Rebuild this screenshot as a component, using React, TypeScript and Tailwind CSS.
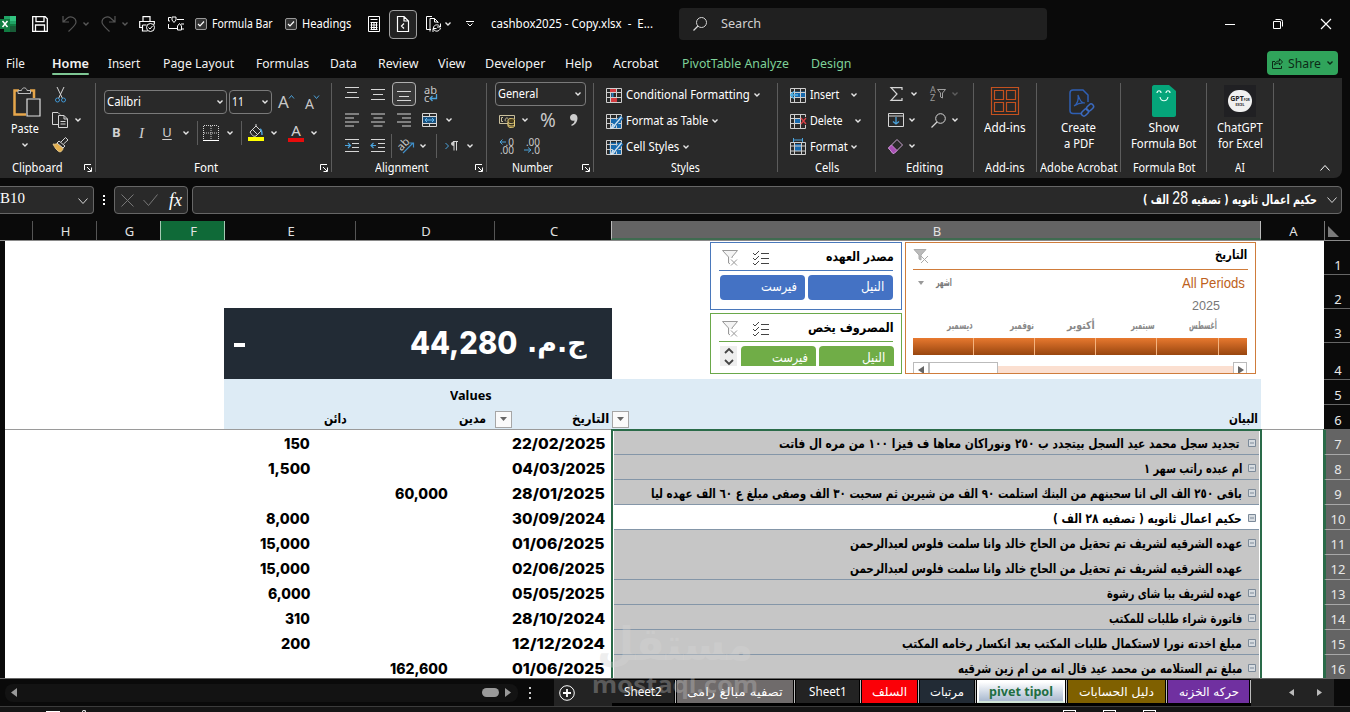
import { useLayoutEffect, useRef, useState } from "react";
import type { ReactNode } from "react";

type FitProps = { w: number; className?: string; rtl?: boolean; children: ReactNode };

function Fit({ w, className = "", rtl = false, children }: FitProps) {
  const ref = useRef<HTMLSpanElement>(null);
  const [scale, setScale] = useState(1);
  useLayoutEffect(() => {
    if (ref.current) setScale(w / ref.current.offsetWidth);
  }, [w]);
  return (
    <span dir="ltr" className={`block shrink-0 whitespace-nowrap ${className}`} style={{ width: w }}>
      <span
        ref={ref}
        dir={rtl ? "rtl" : "ltr"}
        className="inline-block origin-left"
        style={{ transform: `scaleX(${scale})` }}
      >
        {children}
      </span>
    </span>
  );
}

function Ico({ w = 16, h = 16, className = "", children }: { w?: number; h?: number; className?: string; children: ReactNode }) {
  return (
    <svg
      width={w}
      height={h}
      viewBox={`0 0 ${w} ${h}`}
      fill="none"
      stroke="#d6d6d6"
      className={`block shrink-0 overflow-visible ${className}`}
    >
      {children}
    </svg>
  );
}

function Chev({ className = "", color = "#e6e6e6" }: { className?: string; color?: string }) {
  return (
    <Ico w={6} h={4} className={className}>
      <path d="M.5 .5 3 3 5.5 .5" stroke={color} strokeWidth="1.4" />
    </Ico>
  );
}

function Launcher({ className = "" }: { className?: string }) {
  return (
    <Ico w={8} h={8} className={className}>
      <path d="M.5 6V.5H7M3 3l4 4M7.5 3.5v4h-4" stroke="#fff" />
    </Ico>
  );
}

function Sep() {
  return <div className="mt-[5px] h-[89px] w-px shrink-0 bg-[#5c5c5c]" />;
}

function Lines({ d, className = "" }: { d: string; className?: string }) {
  return (
    <Ico w={14} h={14} className={className}>
      <path d={d} strokeWidth="1.1" />
    </Ico>
  );
}

function TitleBar() {
  return (
    <div className="flex h-[48px] items-center">
      <Ico w={16} h={16}>
        <path d="M4 0h12v16H4z" fill="#21a366" stroke="none" />
        <path d="M10 0h6v5h-6z" fill="#33c481" stroke="none" />
        <path d="M4 8h12v8H4z" fill="#107c41" stroke="none" />
        <path d="M10 10h6v6h-6z" fill="#185c37" stroke="none" />
        <path d="M-2 3h12v10H-2z" fill="#107c41" stroke="none" />
        <path d="m2.5 5 5 6M7.500 5l-5 6" stroke="#fff" strokeWidth="1.5" />
      </Ico>
      <Ico className="ml-4">
        <path d="M.7.7h12.500l2.100 2.100v12.500H.7zM4 .7v5h8v-5M3.500 15V9h9v6" stroke="#fff" strokeWidth="1.300" />
      </Ico>
      <Ico w={15} className="ml-[14px]">
        <path d="M1 0v6h6M1 6l4.500-4C9-.5 14 2 14 6c0 3-3 5-7.500 9.500" stroke="#555" strokeWidth="1.200" />
      </Ico>
      <Chev className="ml-[6px]" color="#5a5a5a" />
      <Ico w={15} className="ml-3">
        <path d="M14 0v6H8M14 6 9.500 2C6-.5 1 2 1 6c0 3 3 5 7.500 9.500" stroke="#555" strokeWidth="1.200" />
      </Ico>
      <Chev className="ml-[6px]" color="#5a5a5a" />
      <Ico className="ml-[11px]">
        <path d="M4 5V.7h7V5M3 11.500H.7V5.500h14.600v3M3.500 9v6h5M3.500 9h4" stroke="#fff" strokeWidth="1.200" />
        <circle cx="11.500" cy="11.500" r="4" stroke="#fff" />
        <path d="m9.500 11.500 1.500 1.500 2.500-3" stroke="#fff" />
      </Ico>
      <Ico className="ml-[13px]">
        <path d="M3 1.500H.5V5H2M.5 8v4.500h6M9 3.500h7M6 12.500h3M13 8h3M13 13h3" stroke="#fff" />
        <path d="M4 1h4v3L6 6.500 4 4zM9.500 14v-4l2-2.500 2 2.500v4z" stroke="#fff" />
      </Ico>
      <Check className="ml-[11px]" />
      <Fit w={61} className="ml-[5px] text-xs text-white">Formula Bar</Fit>
      <Check className="ml-3" />
      <Fit w={49} className="ml-[5px] text-xs text-white">Headings</Fit>
      <Ico w={12} h={16} className="ml-[17px]">
        <path d="M.5.5h11v15H.5zM2.500 3.500h7M2.500 6.500h7M2.500 9h7M2.500 11.500h7M2.500 13.500h7M3.500 6v8M6 6v8M8.500 6v8" stroke="#fff" />
      </Ico>
      <div className="ml-[9px] flex h-[29px] w-7 items-center justify-center rounded border border-[#a0a0a0] bg-[#222]">
        <Ico w={12} h={16}>
          <path d="M.5.5H7l4.500 4.500v10.500H.5zM7 .5V5h4.500M7 7.500 4.500 10 7 12.500" stroke="#fff" strokeWidth="1.200" />
        </Ico>
      </div>
      <Ico w={15} className="ml-[9px]">
        <path d="M5 13.500H.5V.5H6M4 15.500V2.500h4.500L12 6v1M8.500 2.500V6H12" stroke="#fff" />
        <path d="M7.500 12c0-4 6-4 6.500-1M14.500 7.500V11H11M14.500 12c-1 4-6 4-7 1M7 16v-3.500h3.500" stroke="#fff" />
      </Ico>
      <Chev className="ml-1" />
      <Ico w={8} h={6} className="ml-[15px]">
        <path d="M0 .5h8M1.500 2.500 4 5l2.500-2.500" stroke="#fff" />
      </Ico>
      <Fit w={162} className="ml-[17px] text-xs text-white">cashbox2025 - Copy.xlsx&nbsp; -&nbsp; E...</Fit>
      <div className="ml-[26px] flex h-8 w-[368px] items-center rounded-sm bg-[#202020]">
        <Ico w={14} h={14} className="ml-[14px]">
          <circle cx="8.500" cy="5.500" r="5" />
          <path d="M5 9 .5 13.500" strokeWidth="1.300" />
        </Ico>
        <Fit w={40} className="ml-[14px] text-[13px] text-[#d0d0d0]">Search</Fit>
      </div>
      <div className="ml-[178px] h-px w-[10px] bg-white" />
      <Ico w={10} h={10} className="ml-[38px]">
        <path d="M.5 2.500h7v7h-7zM2.500.5h5a2 2 0 0 1 2 2v5" stroke="#fff" />
      </Ico>
      <Ico w={10} h={10} className="ml-[38px]">
        <path d="m0 0 10 10M10 0 0 10" stroke="#fff" strokeWidth="1.200" />
      </Ico>
    </div>
  );
}

function Check({ className = "" }: { className?: string }) {
  return (
    <Ico w={12} h={12} className={className}>
      <rect x=".5" y=".5" width="11" height="11" rx="1.500" fill="#333" stroke="#999" />
      <path d="m3 6 2 2 4-4.500" stroke="#fff" strokeWidth="1.200" />
    </Ico>
  );
}

function MenuTabs() {
  return (
    <div className="flex h-[30px] items-center text-[13px] leading-5 text-[#f2f2f2]">
      <Fit w={19} className="ml-[6px]">File</Fit>
      <div className="relative ml-[27px]">
        <Fit w={37} className="font-semibold">Home</Fit>
        <div className="absolute -bottom-[2px] h-[2px] w-[37px] rounded bg-[#7ec794]" />
      </div>
      <Fit w={32} className="ml-[19px]">Insert</Fit>
      <Fit w={71} className="ml-[23px]">Page Layout</Fit>
      <Fit w={53} className="ml-[22px]">Formulas</Fit>
      <Fit w={27} className="ml-[21px]">Data</Fit>
      <Fit w={40} className="ml-[21px]">Review</Fit>
      <Fit w={27} className="ml-5">View</Fit>
      <Fit w={60} className="ml-5">Developer</Fit>
      <Fit w={27} className="ml-5">Help</Fit>
      <Fit w={46} className="ml-[21px]">Acrobat</Fit>
      <Fit w={107} className="ml-[23px] text-[#7fd199]">PivotTable Analyze</Fit>
      <Fit w={40} className="ml-[22px] text-[#7fd199]">Design</Fit>
      <div className="ml-[416px] flex h-6 w-[71px] items-center rounded bg-[#30a45b]">
        <Ico w={11} h={11} className="ml-[5px]">
          <path d="M3 3.500H.5v7h9V8M2.500 7c.5-3 2.500-4 5-4V.8L10.500 4l-3 3V5C5.500 5 4 5.500 2.500 7z" stroke="#0c2b17" />
        </Ico>
        <Fit w={33} className="ml-[5px] text-[#0c2b17]">Share</Fit>
        <Chev className="ml-[6px]" color="#0c2b17" />
      </div>
    </div>
  );
}

function Group({ className, label, lw, lx, launch, children }: { className: string; label: string; lw: number; lx: string; launch?: string; children: ReactNode }) {
  return (
    <div className={`flex shrink-0 flex-col ${className}`}>
      <div className="h-[80px]">{children}</div>
      <div className="flex h-5 items-center text-xs text-white">
        <Fit w={lw} className={lx}>{label}</Fit>
        {launch && <Launcher className={launch} />}
      </div>
    </div>
  );
}

function GridIcon({ kind }: { kind: "cond" | "table" | "cell" | "insert" | "delete" | "format" }) {
  return (
    <Ico>
      {kind === "cond" && <path d="M4 1h6v4H4zM5 10.500h6V15H5z" fill="#d23a3f" stroke="none" />}
      {kind === "table" && <path d="M5 5h10v10H5z" fill="#1769ad" stroke="none" />}
      {kind === "cell" && <path d="M3.500 3.500H15V15H3.500z" fill="#1769ad" stroke="none" />}
      {kind === "insert" && <path d="M5 4.500h10.500v6H5z" fill="#1769ad" stroke="none" />}
      {kind === "delete" && <path d="M4 5h6v6H4z" fill="#1769ad" stroke="none" />}
      {kind === "format" && <path d="M4.500 5h7v7h-7z" fill="#1769ad" stroke="none" />}
      <path
        d={kind === "format" ? "M.5 3.500h15v12H.5zM.5 7h15M.5 12h15M4.500 3v13M11.500 3v13" : "M.5 1.500h15v14H.5zM.5 5.500h15M.5 10.500h15M4.500 1v14M10.500 1v14"}
        stroke="#cfcfcf"
      />
      {kind === "cond" && <path d="M4 2h6v3H4zM5 11h6v4H5z" fill="#d23a3f" stroke="none" />}
      {kind === "cond" && <path d="M5.500 6h2v4h-2z" fill="#2c7cc0" stroke="none" />}
      {(kind === "table" || kind === "cell") && (
        <>
          <path d="m16 4-8 8" stroke="#1769ad" strokeWidth="4" />
          <path d="m15.500 4-6 7c-1 3-2.500 4-5 4.500 2-1 1-2 2.500-4l2 1.500" stroke="#cfe3f3" strokeWidth="1.400" />
        </>
      )}
      {kind === "insert" && <path d="M8 8H1M4 4.500.8 8 4 11.500" stroke="#4db2ea" strokeWidth="1.500" />}
      {kind === "delete" && (
        <>
          <path d="M11 4h6v8h-6z" fill="#292929" stroke="none" />
          <path d="m11 5 5 6M16 5l-5 6" stroke="#dc4248" strokeWidth="1.300" />
        </>
      )}
      {kind === "format" && <path d="M3.500 1h9M3.500-1v4M12.500-1v4" stroke="#4ba3dc" />}
    </Ico>
  );
}

function MenuRow({ kind, label, w, chev }: { kind: "cond" | "table" | "cell" | "insert" | "delete" | "format"; label: string; w: number; chev: string }) {
  return (
    <div className="flex h-[26px] items-center text-xs text-white">
      <GridIcon kind={kind} />
      <Fit w={w} className="ml-1">{label}</Fit>
      <Chev className={chev} />
    </div>
  );
}

function BigButton({ icon, lines, widths }: { icon: ReactNode; lines: string[]; widths: number[] }) {
  return (
    <div className="flex flex-col items-center text-xs leading-4 text-white">
      <div className="mb-[2px] flex h-10 items-center pt-[5px]">{icon}</div>
      {lines.map((line, i) => (
        <Fit key={line} w={widths[i]}>{line}</Fit>
      ))}
    </div>
  );
}

function Ribbon() {
  return (
    <div className="flex h-[100px] w-[1342px] rounded-br-lg bg-[#292929]">
      <Group className="w-[95px]" label="Clipboard" lw={51} lx="ml-3" launch="ml-[21px]">
        <div className="flex">
          <div className="flex w-[50px] flex-col items-center pt-[9px]">
            <Ico w={28} h={30} className="ml-1">
              <path d="M6 3.500H1.500v24H13M17 3.500h4V11" stroke="#e6a64b" strokeWidth="2.500" />
              <path d="M5 6.500V3.500h3.500C9 0 13.500 0 14 3.500h3.500v3z" fill="#292929" stroke="#bdbdbd" />
              <path d="M14 12h13v17H14z" fill="#292929" stroke="#e0e0e0" strokeWidth="1.200" />
            </Ico>
            <Fit w={28} className="mt-1 text-xs text-white">Paste</Fit>
            <Chev className="mt-[6px]" />
          </div>
          <div className="flex w-11 flex-col pt-[9px]">
            <Ico w={11} h={16} className="ml-[5px]">
              <path d="m2 0 5.500 11.500M9 0 3.500 11.500" />
              <circle cx="2.500" cy="13" r="2" stroke="#3f97d4" />
              <circle cx="8.500" cy="13" r="2" stroke="#3f97d4" />
            </Ico>
            <div className="mt-[9px] flex items-center">
              <Ico className="ml-[2px]">
                <path d="M6 12.500H.5V.5H6l2 2M6.500 3.500H12l3.500 3.500v8.500h-9zM12 3.500V7h3.500M8.500 9.500h5M8.500 12h5" />
              </Ico>
              <Chev className="ml-[7px]" />
            </div>
            <Ico className="ml-[2px] mt-[9px]">
              <path d="M1 7c3 1 4-1 5-1l5 5c0 2-1 3-3 4-3-1-5-4-7-8z" fill="#e4b04f" stroke="#e4c686" />
              <path d="m5 6 2-2 6 5-2 2zM9 5l4.500-4.500L16 3l-4.500 4" fill="#292929" />
            </Ico>
          </div>
        </div>
      </Group>
      <Sep />

      <Group className="w-[235px]" label="Font" lw={24} lx="ml-[98px]" launch="ml-[102px]">
        <div className="flex pt-3">
          <div className="ml-2 flex h-6 w-[123px] items-center rounded border border-[#7a7a7a] text-xs text-white">
            <Fit w={34} className="ml-[2px]">Calibri</Fit>
            <Chev className="ml-[76px]" />
          </div>
          <div className="ml-[2px] flex h-6 w-[43px] items-center rounded border border-[#7a7a7a] text-xs text-white">
            <Fit w={12} className="ml-[2px]">11</Fit>
            <Chev className="ml-[18px]" />
          </div>
          <div className="ml-[6px] flex h-6 w-[12px] items-center text-[17px] text-[#c8c8c8]">A</div>
          <Ico w={5} h={4} className="-ml-px mt-[5px]">
            <path d="m0 3.500 2.500-3 2.500 3" stroke="#4c9fd6" />
          </Ico>
          <div className="ml-[11px] flex h-6 w-[10px] items-center pt-[2px] text-[14px] text-[#c8c8c8]">A</div>
          <Ico w={5} h={4} className="-ml-[1px] mt-[5px]">
            <path d="m0 .5 2.500 3 2.500-3" stroke="#4c9fd6" />
          </Ico>
        </div>
        <div className="mt-[7px] flex h-6 items-center text-[13px] text-[#d0d0d0]">
          <span className="ml-4 w-[10px] font-bold">B</span>
          <span className="ml-[17px] w-2 font-['Liberation_Serif'] text-[15px] italic">I</span>
          <span className="ml-[15px] w-[10px] text-center underline underline-offset-2">U</span>
          <Chev className="ml-[11px]" />
          <div className="ml-2 h-6 w-px bg-[#5c5c5c]" />
          <Ico className="ml-[5px]">
            <path d="M.5 1v13M15.500 1v13M8 1v13M1 .5h14M1 8h14" strokeDasharray="1 1" />
            <path d="M0 15.500h16" stroke="#fff" />
          </Ico>
          <Chev className="ml-2" />
          <div className="ml-[8px] h-6 w-px bg-[#5c5c5c]" />
          <Ico className="ml-[6px]">
            <path d="m2 7 6-6 5 5-5 5c-3 1-4-1-6-4zM5 5l5 5M8 1V-1" />
            <path d="M12 4c2 1 2 3 2 6" stroke="#4c9fd6" strokeWidth="1.500" />
            <path d="M0 12h16v4H0z" fill="#ff0" stroke="none" />
          </Ico>
          <Chev className="ml-[7px]" />
          <div className="ml-[11px] flex w-4 flex-col items-center">
            <span className="h-[14px] text-[15px] leading-[13px]">A</span>
            <div className="h-1 w-4 bg-[#e80c0c]" />
          </div>
          <Chev className="ml-[7px]" />
        </div>
      </Group>
      <Sep />

      <Group className="w-[154px]" label="Alignment" lw={53} lx="ml-[43px]" launch="ml-[47px]">
        <div className="flex h-[29px] items-center pt-[3px]">
          <Lines className="ml-[13px]" d="M0 .5h14M2 5.500h10M0 10.500h14" />
          <Lines className="ml-3" d="M0 2.500h14M2 7.500h10M0 12.500h14" />
          <div className="ml-[7px] flex h-6 w-6 items-center justify-center rounded border border-[#b0b0b0] bg-[#393939]">
            <Lines d="M0 4.500h14M2 9.500h10M0 13.500h14" />
          </div>
          <div className="ml-2 text-[11px] leading-[8px] text-[#c8c8c8]">
            <div>ab</div>
            <div className="flex">
              c
              <Ico w={8} h={8}>
                <path d="M7.500 0v4.500H1M3.500 2 1 4.500 3.500 7" stroke="#4ba3dc" strokeWidth="1.300" />
              </Ico>
            </div>
          </div>
        </div>
        <div className="flex h-[26px] items-center">
          <Lines className="ml-[13px]" d="M0 1h14M0 5h9M0 9h14M0 13h9" />
          <Lines className="ml-3" d="M0 1h14M2.500 5h9M0 9h14M2.500 13h9" />
          <Lines className="ml-3" d="M0 1h14M5 5h9M0 9h14M5 13h9" />
          <Ico w={15} h={14} className="ml-[11px]">
            <path d="M.5.5h14v13H.5zM.5 3.500h14M.5 10.500h14M7.500.5v3M7.500 10.500v3" />
            <path d="M1 4h13v6H1z" fill="#174f7c" stroke="none" />
            <path d="M3 7h9M5 5 3 7l2 2M10 5l2 2-2 2" stroke="#69bcf0" />
          </Ico>
          <Chev className="ml-[9px]" />
        </div>
        <div className="flex h-[25px] items-center">
          <Ico w={14} h={13} className="ml-[13px]">
            <path d="M0 .5h14M7 4.500h7M7 8.500h7M0 12.500h14" />
            <path d="M0 6.500h5M3 4l2.500 2.500L3 9" stroke="#4ba3dc" strokeWidth="1.200" />
          </Ico>
          <Ico w={14} h={13} className="ml-3">
            <path d="M0 .5h14M7 4.500h7M7 8.500h7M0 12.500h14" />
            <path d="M5 6.500H0M2.500 4 0 6.500 2.500 9" stroke="#4ba3dc" strokeWidth="1.200" />
          </Ico>
          <div className="ml-[6px] h-6 w-px bg-[#5c5c5c]" />
          <div className="relative ml-[6px] h-4 w-4 text-[11px] leading-3 text-[#c8c8c8]">
            <span className="-ml-[2px] -mt-px block w-4 -rotate-45">ab</span>
            <Ico className="absolute left-0 top-0">
              <path d="M5 15 15 5M11 5h4.500v4.500" stroke="#3f8fc9" strokeWidth="1.200" />
            </Ico>
          </div>
          <Chev className="ml-[6px]" />
          <div className="ml-[10px] h-6 w-px bg-[#5c5c5c]" />
          <Ico w={13} h={10} className="ml-[8px]">
            <path d="m.5 2 3 3-3 3" stroke="#4ba3dc" />
            <path d="M9 9.500V.5M11.500 9.500V.5M13 .5H8" />
            <path d="M9 .5c-4 0-4 4.500 0 4.500z" fill="#ccc" stroke="none" />
          </Ico>
          <Chev className="ml-[9px]" />
        </div>
      </Group>
      <Sep />

      <Group className="w-[106px]" label="Number" lw={41} lx="ml-[25px]" launch="ml-[29px]">
        <div className="flex pt-1">
          <div className="ml-2 flex h-6 w-[91px] items-center rounded border border-[#7a7a7a] text-xs text-white">
            <Fit w={40} className="ml-[2px]">General</Fit>
            <Chev className="ml-[37px]" />
          </div>
        </div>
        <div className="flex h-[28px] items-center text-[#c8c8c8]">
          <Ico w={16} h={13} className="ml-3">
            <path d="M9 9.500H.5V1.500h15V5M4 3.500H2.500v4H4M9 4.500c-2-2-4 2-2 3" stroke="#c9bf9c" />
            <path d="M9 6c0-2 6.500-2 6.500 0v6c0 2-6.500 2-6.500 0zM9 8c0 2 6.500 2 6.500 0M9 10.500c0 2 6.500 2 6.500 0" fill="#4a3c18" stroke="#e8cf7b" />
          </Ico>
          <Chev className="ml-[7px]" />
          <Fit w={16} className="ml-3 text-[19px] leading-5">%</Fit>
          <Ico w={8} h={12} className="ml-[14px]">
            <path d="M0 3.500C0-1 7.500-1.500 7.500 4c0 4-2.500 7-6 8v-1.500c2-1 3-2 3-4C2 7.500 0 6 0 3.500z" fill="#ccc" stroke="none" />
          </Ico>
        </div>
        <div className="flex h-6 items-center text-[10px] leading-[8px] text-[#c8c8c8]">
          <div className="ml-[11px] w-4 text-right">
            <div className="flex items-center justify-end">
              <Ico w={7} h={6}>
                <path d="M7 3H1M3.500.5 1 3l2.500 2.500" stroke="#4ba3dc" />
              </Ico>
              .0
            </div>
            .00
          </div>
          <div className="ml-[10px] w-4 text-right">
            .00
            <div className="flex items-center justify-end">
              <Ico w={8} h={6}>
                <path d="M0 3h7M4 .5 7 3 4 5.500" stroke="#4ba3dc" />
              </Ico>
              .0
            </div>
          </div>
        </div>
      </Group>
      <Sep />

      <Group className="w-[183px]" label="Styles" lw={29} lx="ml-[77px]">
        <div className="ml-3 pt-1">
          <MenuRow kind="cond" label="Conditional Formatting" w={124} chev="ml-1" />
          <MenuRow kind="table" label="Format as Table" w={82} chev="ml-1" />
          <MenuRow kind="cell" label="Cell Styles" w={53} chev="ml-1" />
        </div>
      </Group>
      <Sep />

      <Group className="w-[97px]" label="Cells" lw={24} lx="ml-[37px]">
        <div className="ml-3 pt-1">
          <MenuRow kind="insert" label="Insert" w={29} chev="ml-3" />
          <MenuRow kind="delete" label="Delete" w={33} chev="ml-3" />
          <MenuRow kind="format" label="Format" w={38} chev="ml-[3px]" />
        </div>
      </Group>
      <Sep />

      <Group className="w-[97px]" label="Editing" lw={37} lx="ml-[30px]">
        <div className="ml-3 pt-[3px]">
          <div className="flex h-[26px] items-center">
            <Ico w={13} h={14} className="ml-[2px]">
              <path d="M12 3V.7H1L7 7 1 13.300h11V11" strokeWidth="1.200" />
            </Ico>
            <Chev className="ml-2" />
            <div className="ml-[13px] text-[9px] leading-[8px] text-[#999]">
              <div>A</div>
              <div>Z</div>
            </div>
            <Ico w={9} h={10} className="ml-[1px]">
              <path d="M.5.5h8L5.500 4v5L3.500 8V4z" stroke="#a0a0a0" />
            </Ico>
            <Chev className="ml-[6px]" color="#5e5e5e" />
          </div>
          <div className="flex h-[26px] items-center">
            <Ico w={16} h={14}>
              <path d="M.5.5h15v13H.5zM.5 3h15" />
              <path d="M8 4v7M5 8.500 8 11l3-2.500" stroke="#4ba3dc" strokeWidth="1.300" />
            </Ico>
            <Chev className="ml-[5px]" />
            <Ico w={15} h={15} className="ml-4">
              <circle cx="9.500" cy="5.500" r="4.800" />
              <path d="M6 9 .5 14.500" strokeWidth="1.300" />
            </Ico>
            <Chev className="ml-[6px]" />
          </div>
          <div className="flex h-[26px] items-center">
            <Ico w={15} h={15}>
              <path d="m.5 9 8.500-8.500 5.500 5.500-8.500 8.500H5z" stroke="#c9a5d0" />
              <path d="m.5 9 3-3L9 11.500l-3 3H5z" fill="#a94fb5" stroke="#c98ad2" />
            </Ico>
            <Chev className="ml-[6px]" />
          </div>
        </div>
      </Group>
      <Sep />

      <Group className="w-[62px]" label="Add-ins" lw={40} lx="ml-[11px]">
        <BigButton
          lines={["Add-ins"]}
          widths={[42]}
          icon={
            <Ico w={28} h={28}>
              <path d="M.5.5h27v27H.5zM3.500 3.500h9v9h-9zM15.500 3.500h9v9h-9zM3.500 15.500h9v9h-9zM15.500 15.500h9v9h-9z" stroke="#c4511f" strokeWidth="1.200" />
            </Ico>
          }
        />
      </Group>
      <Sep />
      <Group className="w-[83px]" label="Adobe Acrobat" lw={77} lx="ml-[3px]">
        <BigButton
          lines={["Create", "a PDF"]}
          widths={[35, 30]}
          icon={
            <Ico w={26} h={28} className="ml-[6px] mt-1">
              <path d="M12 24.500H4c-2 0-3-1-3-3V4c0-2 1-3 3-3h10l5 5v7" stroke="#2f5fb3" strokeWidth="1.500" />
              <path d="M9 6c2 5 3 8 7 8-5-1-8 1-11 3 3-2 5-5 4-11z" stroke="#2f5fb3" strokeWidth="1.200" />
              <rect x="12" y="21" width="8" height="5" rx="2.500" transform="rotate(-45 16 23.500)" stroke="#3b6abf" strokeWidth="1.500" />
              <rect x="17" y="16" width="8" height="5" rx="2.500" transform="rotate(-45 21 18.500)" stroke="#3b6abf" strokeWidth="1.500" />
            </Ico>
          }
        />
      </Group>
      <Sep />
      <Group className="w-[85px]" label="Formula Bot" lw={62} lx="ml-3">
        <BigButton
          lines={["Show", "Formula Bot"]}
          widths={[30, 65]}
          icon={
            <Ico w={24} h={32}>
              <path d="M2 0h15l7 6v24c0 1-1 2-2 2H2c-1 0-2-1-2-2V2C0 1 1 0 2 0z" fill="#05a57a" stroke="none" />
              <path d="M5 8c0-3 4-3 4 0M14 8c0-3 4-3 4 0M8 12c1 5 7 5 8 0" stroke="#e5fff6" strokeWidth="1.200" />
            </Ico>
          }
        />
      </Group>
      <Sep />
      <Group className="w-[66px]" label="AI" lw={10} lx="ml-7">
        <BigButton
          lines={["ChatGPT", "for Excel"]}
          widths={[46, 45]}
          icon={
            <div className="flex h-8 w-8 items-center justify-center bg-[#202023]">
              <div className="flex h-[22px] w-6 flex-col items-center justify-center rounded-full bg-[#f0f0f0] text-[#222]">
                <div className="text-[7px] font-bold leading-[7px]">
                  GPT<span className="text-[3px]">FOR</span>
                </div>
                <div className="text-[3px] font-bold leading-[3px]">EXCEL</div>
              </div>
            </div>
          }
        />
      </Group>
      <Sep />
      <Ico w={10} h={6} className="ml-[46px] mt-[87px]">
        <path d="m.5 5.500 4.500-5 4.500 5" stroke="#fff" />
      </Ico>
    </div>
  );
}

function FormulaBar() {
  return (
    <div className="mt-2 flex h-7">
      <div className="flex w-[94px] items-center rounded-r border border-l-0 border-[#666] bg-[#292929] text-white">
        <Fit w={25} className="-mt-[3px] font-['Liberation_Serif'] text-[15px]">B10</Fit>
        <Ico w={10} h={6} className="ml-[53px] mt-[2px]">
          <path d="m.5.5 4.500 5 4.500-5" />
        </Ico>
      </div>
      <div className="ml-[9px] flex w-[2px] flex-col justify-center gap-[2px]">
        <div className="h-[2px] bg-white" />
        <div className="h-[2px] bg-white" />
        <div className="h-[2px] bg-white" />
      </div>
      <div className="ml-[9px] flex w-[74px] items-center rounded border border-[#666] bg-[#292929]">
        <Ico w={13} h={13} className="ml-[6px]">
          <path d="m.5.5 12 12M12.500.5l-12 12" stroke="#777" />
        </Ico>
        <Ico w={15} h={12} className="ml-[9px]">
          <path d="m.5 6 5 5.500 9-11" stroke="#777" />
        </Ico>
        <span className="ml-[11px] font-['Liberation_Serif'] text-lg italic leading-5 text-white">fx</span>
      </div>
      <div className="ml-1 flex w-[1150px] items-center justify-end rounded border border-[#666] bg-[#292929] text-white">
        <Fit w={174} rtl className="-mt-[2px] font-['DejaVu_Sans'] text-[13px] font-bold leading-5">
          حكيم اعمال ثانويه ( تصفيه <span className="font-['Liberation_Sans'] text-[19px] font-normal">28</span> الف )
        </Fit>
        <Ico w={10} h={6} className="ml-[10px] mr-1">
          <path d="m.5.5 4.500 5 4.500-5" />
        </Ico>
      </div>
    </div>
  );
}

function ColumnHeaders() {
  return (
    <div className="mt-[7px] flex h-5 border-b border-[#8a8a8a] pl-[5px] text-[13px] leading-5 text-[#e2e2e2] *:shrink-0 *:pl-[2px] *:text-center">
      <div className="w-7 border-r border-[#555]" />
      <div className="w-16 border-r border-[#555]">H</div>
      <div className="w-[63px]">G</div>
      <div className="w-[65px] border-x border-[#a5c9b3] bg-[#0f6a38]">F</div>
      <div className="w-[131px] border-r border-[#555]">E</div>
      <div className="w-[139px] border-r border-[#555]">D</div>
      <div className="w-[116px]">C</div>
      <div className="w-[650px] border-x border-b-2 border-x-[#bbb] border-b-[#3f6b50] bg-[#646464]">B</div>
      <div className="w-16 border-r border-[#777]">A</div>
      <div className="w-4 pt-[5px]">
        <Ico w={11} h={11} className="ml-px">
          <path d="M0 0v11h11z" fill="#7b7b7b" stroke="none" />
        </Ico>
      </div>
    </div>
  );
}

function SlicerHead({ title, w }: { title: string; w: number }) {
  return (
    <div className="flex h-[27px] items-center">
      <Ico w={16} h={16} className="ml-[11px] mt-[2px]">
        <path d="M.5.500h15L10 7v8l-3.500-2V7z" fill="#f4f4f4" stroke="#999" />
        <path d="M8 8h8v8H8z" fill="#fff" stroke="none" />
        <path d="m9 9.500 6 6M15 9.500l-6 6" stroke="#999" />
      </Ico>
      <Ico w={16} h={14} className="ml-[15px] mt-[2px]">
        <path d="m0 2 2 2 4-4M0 7l2 2 4-4M0 12l2 2 4-4M8 2.500h8M8 7.500h8M8 12.500h8" stroke="#444" />
      </Ico>
      <Fit w={w} rtl className="ml-auto mr-[7px] text-[13px] font-bold leading-5 text-black">{title}</Fit>
    </div>
  );
}

const months: [string, number, string][] = [
  ["ديسمبر", 26, "ml-[41px]"],
  ["نوفمبر", 24, "ml-[37px]"],
  ["أكتوبر", 28, "ml-[33px]"],
  ["سبتمبر", 24, "ml-[36px]"],
  ["أغسطس", 28, "ml-[34px]"],
];

function TopArea() {
  return (
    <div className="flex h-[138px] font-['DejaVu_Sans']">
      <div className="ml-[219px] mt-[67px] flex h-[71px] w-[388px] items-center bg-[#222b35] text-white">
        <div className="ml-[10px] mt-[2px] h-1 w-[11px] bg-white" />
        <Fit w={107} className="ml-[165px] font-[Inter] text-[31px] font-extrabold">44,280</Fit>
        <Fit w={60} rtl className="ml-[10px] text-[26px] font-bold">ج.م.</Fit>
      </div>
      <div className="ml-[98px] w-[192px] pt-[1px]">
        <div className="h-[68px] border border-[#4a78bb] bg-white">
          <SlicerHead title="مصدر العهده" w={68} />
          <div className="ml-2 h-px w-[174px] bg-[#4a78bb]" />
          <div className="ml-[9px] mt-1 flex gap-[3px] text-[13px] leading-[23px] text-white">
            <div className="flex h-[25px] w-[85px] justify-end rounded bg-[#4472c4] pr-2">
              <Fit w={36} rtl>فيرست</Fit>
            </div>
            <div className="flex h-[25px] w-[85px] justify-end rounded bg-[#4472c4] pr-[9px]">
              <Fit w={23} rtl>النيل</Fit>
            </div>
          </div>
        </div>
        <div className="mt-[3px] h-[61px] border border-[#6aa84a] bg-white">
          <SlicerHead title="المصروف يخص" w={86} />
          <div className="ml-2 h-px w-[174px] bg-[#6aa84a]" />
          <div className="ml-[9px] mt-1 flex h-[20px] overflow-hidden text-[13px] leading-[23px] text-white">
            <div className="flex w-[17px] flex-col items-center justify-center gap-[7px] bg-[#eee]">
              <Ico w={8} h={4}>
                <path d="m0 4 4-4 4 4" stroke="#444" strokeWidth="1.800" />
              </Ico>
              <Ico w={8} h={4}>
                <path d="m0 0 4 4 4-4" stroke="#444" strokeWidth="1.800" />
              </Ico>
            </div>
            <div className="ml-1 flex h-[25px] w-[75px] justify-end rounded-t bg-[#70ad47] pr-2">
              <Fit w={36} rtl>فيرست</Fit>
            </div>
            <div className="ml-[3px] flex h-[25px] w-[75px] justify-end rounded-t bg-[#70ad47] pr-[9px]">
              <Fit w={23} rtl>النيل</Fit>
            </div>
          </div>
        </div>
      </div>
      <div className="ml-[3px] mt-[1px] flex h-[132px] w-[351px] flex-col overflow-hidden border border-[#cf7c3b] bg-white">
        <div className="flex h-[26px] shrink-0 items-center">
          <Ico w={14} h={14} className="ml-[8px]">
            <path d="M0 .500h12L7 6v5L5 10V6z" fill="#bbb" stroke="#aaa" />
            <path d="m7 7 7 7M14 7l-7 7" stroke="#aaa" />
          </Ico>
          <Fit w={32} rtl className="ml-[287px] -mt-[2px] text-[13px] font-bold leading-5 text-black">التاريخ</Fit>
        </div>
        <div className="ml-[7px] h-px w-[335px] shrink-0 bg-[#cf7c3b]" />
        <div className="mt-[3px] flex h-5 shrink-0 items-center text-[#777]">
          <Ico w={6} h={4} className="ml-3">
            <path d="M0 0h6L3 4z" fill="#999" stroke="none" />
          </Ico>
          <Fit w={16} rtl className="ml-3 text-[11px] font-bold">اشهر</Fit>
          <Fit w={63} className="ml-[230px] font-['Liberation_Sans'] text-sm text-[#bd5f20]">All Periods</Fit>
        </div>
        <Fit w={28} className="ml-[286px] mt-[3px] font-['Liberation_Sans'] text-[13px] leading-5 text-[#777]">2025</Fit>
        <div className="flex h-5 shrink-0 items-center text-[11px] font-bold text-[#888]">
          {months.map(([name, w, gap]) => (
            <Fit key={name} w={w} rtl className={gap}>{name}</Fit>
          ))}
        </div>
        <div className="ml-[7px] mt-[2px] flex h-[17px] w-[334px] shrink-0 divide-x divide-[#f4b37f] bg-linear-to-b from-[#e8792f] to-[#98460f]">
          <div className="w-[61px]" />
          <div className="w-[61px]" />
          <div className="w-[61px]" />
          <div className="w-[61px]" />
          <div className="w-[62px]" />
          <div className="w-7" />
        </div>
        <div className="ml-[7px] mt-[7px] flex h-4 w-[334px] shrink-0 items-stretch bg-white">
          <div className="w-4 border border-[#bbb] pl-[4px] pt-[3px]">
            <Ico w={6} h={8}>
              <path d="M6 0v8L0 4z" fill="#666" stroke="none" />
            </Ico>
          </div>
          <div className="w-[69px] border border-[#bbb]" />
          <div className="mt-1 flex-1 bg-[#fbdfd0]" />
          <div className="w-[14px] border border-[#bbb] pl-[4px] pt-[3px]">
            <Ico w={6} h={8}>
              <path d="M0 0v8l6-4z" fill="#666" stroke="none" />
            </Ico>
          </div>
        </div>
      </div>
    </div>
  );
}

function FilterButton({ className = "" }: { className?: string }) {
  return (
    <div className={`flex h-[17px] w-[17px] items-center justify-center border border-[#a6a6a6] bg-[#fafafa] ${className}`}>
      <Ico w={7} h={4}>
        <path d="M0 0h7L3.500 4z" fill="#666" stroke="none" />
      </Ico>
    </div>
  );
}

type Row = {
  e?: [string, number];
  d?: [string, number];
  date: string;
  text: string;
  w: number;
  bg?: string;
  noToggle?: boolean;
  noLine?: boolean;
};

const rows: Row[] = [
  { e: ["150", 26], date: "22/02/2025", text: "تجديد سجل محمد عيد السجل بيتجدد ب ٢٥٠ ونوراكان معاها ف فيزا ١٠٠ من مره ال فاتت", w: 461 },
  { e: ["1,500", 42], date: "04/03/2025", text: "ام عبده راتب سهر ١", w: 98 },
  { d: ["60,000", 53], date: "28/01/2025", text: "باقى ٢٥٠ الف الى انا سحبنهم من البنك استلمت ٩٠ الف من شيرين ثم سحبت ٣٠ الف وصفى مبلغ ع ٦٠ الف عهده ليا", w: 591 },
  { e: ["8,000", 44], date: "30/09/2024", text: "حكيم اعمال ثانويه ( تصفيه ٢٨ الف )", w: 189, bg: "bg-white" },
  { e: ["15,000", 50], date: "01/06/2025", text: "عهده الشرقيه لشريف تم تحةيل من الحاج خالد وانا سلمت فلوس لعبدالرحمن", w: 392, noLine: true },
  { e: ["15,000", 50], date: "02/06/2025", text: "عهده الشرقيه لشريف تم تحةيل من الحاج خالد وانا سلمت فلوس لعبدالرحمن", w: 392, noToggle: true },
  { e: ["6,000", 42], date: "05/05/2025", text: "عهده لشريف ببا شاى رشوة", w: 135 },
  { e: ["310", 25], date: "28/10/2024", text: "فاتورة شراء طلبات للمكتب", w: 133 },
  { e: ["200", 29], date: "12/12/2024", text: "مبلغ اخدته نورا لاستكمال طلبات المكتب بعد انكسار رخامه المكتب", w: 340 },
  { d: ["162,600", 58], date: "01/06/2025", text: "مبلغ تم الستلامه من محمد عيد قال انه من ام زين شرقيه", w: 284 },
];

function PivotTable() {
  return (
    <>
      <div className="ml-[219px] h-[50px] w-[1037px] bg-[#ddebf5] font-['DejaVu_Sans'] text-[13px] font-bold text-black">
        <div className="flex h-[30px] items-center pt-[3px]">
          <Fit w={42} className="ml-[226px] font-['Noto_Sans']">Values</Fit>
        </div>
        <div className="flex h-5 items-center">
          <Fit w={23} rtl className="ml-[100px]">دائن</Fit>
          <Fit w={27} rtl className="ml-[112px]">مدين</Fit>
          <FilterButton className="ml-[9px]" />
          <Fit w={37} rtl className="ml-[60px]">التاريخ</Fit>
          <FilterButton className="ml-[3px]" />
          <Fit w={29} rtl className="ml-auto mr-[3px]">البيان</Fit>
        </div>
      </div>
      <div className="relative h-[249px] overflow-hidden pt-px">
        {rows.map((row, i) => (
          <div key={i} className="flex h-[25px] font-[Inter] text-[15px] font-extrabold leading-[27px] text-black">
            <div className="flex w-[305px] justify-end">{row.e && <Fit w={row.e[1]}>{row.e[0]}</Fit>}</div>
            <div className="flex w-[138px] justify-end">{row.d && <Fit w={row.d[1]}>{row.d[0]}</Fit>}</div>
            <div className="flex w-[157px] justify-end">
              <Fit w={93}>{row.date}</Fit>
            </div>
            <div
              className={`ml-[9px] flex w-[645px] items-center justify-end border-b pt-[2px] font-['DejaVu_Sans'] text-[13px] font-bold leading-[23px] ${row.bg ?? "bg-[#c6c6c6]"} ${row.noLine ? "border-[#c6c6c6]" : "border-[#8496a8]"}`}
            >
              <Fit w={row.w} rtl className={row.date === "22/02/2025" ? "mr-[2px]" : ""}>{row.text}</Fit>
              <div className="ml-[6px] mr-[3px] w-2">
                {!row.noToggle && (
                  <Ico w={8} h={8}>
                    <path d="M.5.5h7v7h-7zM2 4h4" fill="#d6dbe0" stroke="#7c8a99" />
                  </Ico>
                )}
              </div>
            </div>
          </div>
        ))}
        <div className="absolute left-0 top-0 h-px w-[1319px] bg-[#9a9a9a]" />
        <div className="absolute left-[606px] top-0 h-[260px] w-[651px] border-2 border-[#2a6b49] border-t-[#2a6b49]" />
        <div className="absolute right-0 top-0 h-[260px] w-px bg-[#2a6b49]" />
      </div>
    </>
  );
}

const rowHeights = ["h-[34px]", "h-[34px]", "h-[34px]", "h-[37px]", "h-[25px]", "h-[25px]"];

function RowHeaders() {
  return (
    <div className="flex h-[437px] w-[26px] flex-col overflow-hidden text-[13px] leading-4 text-[#e8e8e8]">
      {rowHeights.map((h, i) => (
        <div key={i} className={`flex shrink-0 items-end justify-center border-b border-[#666] pb-px pl-[2px] ${h}`}>{i + 1}</div>
      ))}
      {rows.map((_, i) => (
        <div
          key={i}
          className="flex h-[25px] shrink-0 items-end justify-center border-b border-l-2 border-b-[#a8a8a8] border-l-[#2a6b49] bg-[#646464] pb-[2px]"
        >
          {i + 7}
        </div>
      ))}
    </div>
  );
}

const tabs: { name: string; w: number; box: string; rtl?: boolean }[] = [
  { name: "Sheet2", w: 38, box: "w-[62px] bg-[#232323]" },
  { name: "تصفيه مبالغ رامى", w: 96, box: "w-[116px] bg-[#6f6b6b]", rtl: true },
  { name: "Sheet1", w: 38, box: "w-[63px] bg-[#232323]" },
  { name: "السلف", w: 35, box: "w-[55px] bg-[#fb0007]", rtl: true },
  { name: "مرتبات", w: 34, box: "w-[54px] bg-[#222b35]", rtl: true },
  { name: "pivet tipol", w: 64, box: "w-[88px] border-2 border-white border-b-[#cfe3d6] bg-linear-to-b from-white to-[#a9b9cf] font-bold text-[#1f6e43]" },
  { name: "دليل الحسابات", w: 75, box: "w-[97px] bg-[#7f6000]", rtl: true },
  { name: "حركه الخزنه", w: 60, box: "w-[81px] bg-[#7030a0]", rtl: true },
];

function BottomBar() {
  return (
    <>
      <div className="flex h-7 items-center border-t border-[#666]">
        <div className="ml-[5px] flex h-[18px] w-[513px] items-center rounded-lg bg-[#131313]">
          <Ico w={6} h={9} className="ml-[6px]">
            <path d="M6 0v9L0 4.500z" fill="#9a9a9a" stroke="none" />
          </Ico>
          <div className="ml-[465px] h-[9px] w-[17px] rounded-full bg-[#9a9a9a]" />
          <Ico w={6} h={9} className="ml-[6px]">
            <path d="M0 0v9l6-4.500z" fill="#9a9a9a" stroke="none" />
          </Ico>
        </div>
        <div className="ml-[11px] flex w-[2px] flex-col gap-[3px]">
          <div className="h-[2px] bg-[#ccc]" />
          <div className="h-[2px] bg-[#ccc]" />
          <div className="h-[2px] bg-[#ccc]" />
        </div>
        <div className="ml-[23px] flex h-full w-[780px] items-center bg-[#232323] text-xs text-white">
          <Ico w={16} h={16} className="ml-[5px]">
            <circle cx="8" cy="8" r="7.300" stroke="#fff" />
            <path d="M8 4v8M4 8h8" stroke="#fff" strokeWidth="1.800" />
          </Ico>
          <div className="ml-[37px] flex h-full items-center gap-px bg-black pb-[3px] pt-px">
            {tabs.map((tab) => (
              <div key={tab.name} className="flex h-full border-r border-[#bbb] pr-[1px]">
                <div className={`flex h-full items-center justify-center ${tab.box}`}>
                  <Fit w={tab.w} rtl={tab.rtl} className={tab.rtl ? "font-['DejaVu_Sans']" : ""}>{tab.name}</Fit>
                </div>
              </div>
            ))}
          </div>
          <Ico w={5} h={7} className="ml-[38px]">
            <path d="M5 0v7L0 3.500z" fill="#bbb" stroke="none" />
          </Ico>
          <Ico w={5} h={7} className="ml-[23px]">
            <path d="M0 0v7l5-3.500z" fill="#bbb" stroke="none" />
          </Ico>
        </div>
      </div>
      <div className="flex h-[6px] items-end border-t border-[#3c3c3c] bg-[#151515]">
        <div className="ml-[46px] h-px w-[14px] bg-white" />
        <div className="ml-[22px] h-[2px] w-1 rounded-t border border-b-0 border-white" />
        <div className="ml-[977px] h-[2px] w-[13px] border border-b-0 border-white" />
        <div className="ml-[27px] h-[2px] w-[13px] border border-b-0 border-white" />
        <div className="ml-[27px] h-[2px] w-[13px] border border-b-0 border-white" />
      </div>
    </>
  );
}

export default function App() {
  return (
    <div className="relative h-[712px] w-[1350px] overflow-hidden bg-[#0a0a0a] font-['Noto_Sans','DejaVu_Sans',sans-serif]">
      <TitleBar />
      <MenuTabs />
      <Ribbon />
      <FormulaBar />
      <ColumnHeaders />
      <div className="flex h-[437px] pl-[5px]">
        <div className="w-[1319px] shrink-0 bg-white">
          <TopArea />
          <PivotTable />
        </div>
        <RowHeaders />
      </div>
      <BottomBar />
      <div className="absolute left-[592px] top-[618px] flex w-[166px] flex-col items-center font-bold">
        <Fit w={156} rtl className="font-['DejaVu_Sans'] text-[46px] leading-[52px] text-[#d4d4d4]/40">مستقل</Fit>
        <Fit w={166} className="text-[24px] leading-[28px] text-[#c4c4c4]/35">mostaql.com</Fit>
      </div>
    </div>
  );
}
